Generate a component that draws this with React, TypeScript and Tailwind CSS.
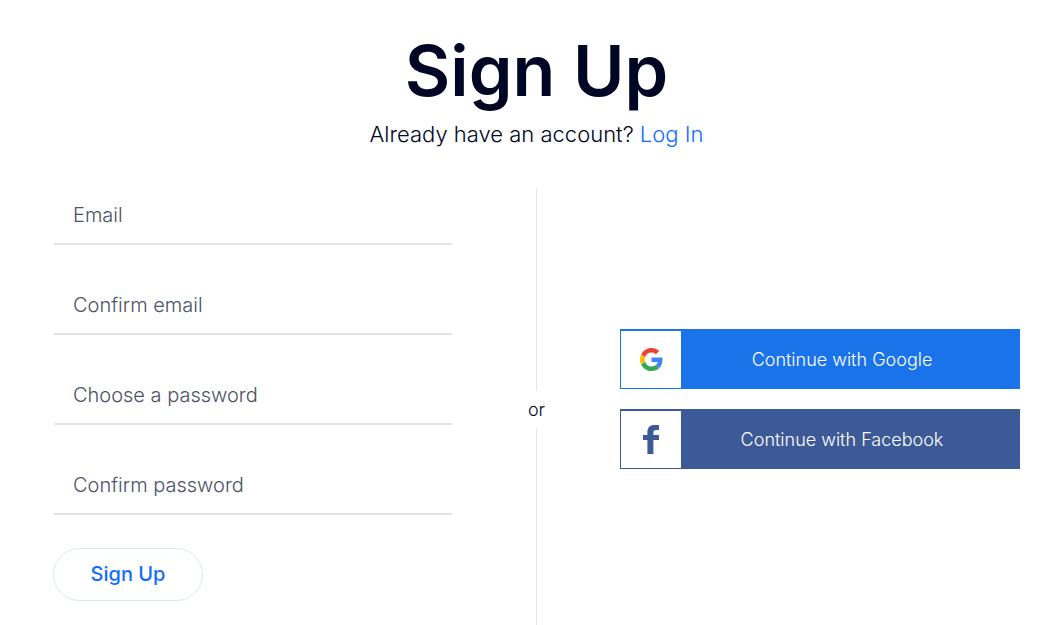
import type { FormEvent, ReactNode } from 'react';

const fields = [
  { id: 'email', label: 'Email', type: 'email' },
  { id: 'confirm-email', label: 'Confirm email', type: 'email' },
  { id: 'password', label: 'Choose a password', type: 'password' },
  { id: 'confirm-password', label: 'Confirm password', type: 'password' },
];

function GoogleIcon() {
  return (
    <svg viewBox="0 0 48 48" className="w-[23px] h-[23px]" aria-hidden="true">
      <path fill="#EA4335" d="M24 9.5c3.54 0 6.71 1.22 9.21 3.6l6.85-6.85C35.9 2.38 30.47 0 24 0 14.62 0 6.51 5.38 2.56 13.22l7.98 6.19C12.43 13.72 17.74 9.5 24 9.5z" />
      <path fill="#4285F4" d="M46.98 24.55c0-1.57-.15-3.09-.38-4.55H24v9.02h12.94c-.58 2.96-2.26 5.48-4.78 7.18l7.73 6c4.51-4.18 7.09-10.36 7.09-17.65z" />
      <path fill="#FBBC05" d="M10.53 28.59c-.48-1.45-.76-2.99-.76-4.59s.27-3.14.76-4.59l-7.98-6.19C.92 16.46 0 20.12 0 24c0 3.88.92 7.54 2.56 10.78l7.97-6.19z" />
      <path fill="#34A853" d="M24 48c6.48 0 11.93-2.13 15.89-5.81l-7.73-6c-2.15 1.45-4.92 2.3-8.16 2.3-6.26 0-11.57-4.22-13.47-9.91l-7.98 6.19C6.51 42.62 14.62 48 24 48z" />
    </svg>
  );
}

function FacebookIcon() {
  return (
    <svg viewBox="0 0 16 29" className="w-4 h-[29px]" fill="#3D5A98" aria-hidden="true">
      <path d="M4.4 29V15H0v-5h4.4V7.2C4.4 2.6 7 0 11.4 0H16v5h-2.9C11 5 10.4 6 10.4 7.6V10H16v5h-5.6v14z" />
    </svg>
  );
}

interface SocialButtonProps {
  icon: ReactNode;
  label: string;
  className: string;
}

function SocialButton({ icon, label, className }: SocialButtonProps) {
  return (
    <button
      type="button"
      className={`flex h-[60px] w-full items-stretch border border-t-2 text-lg font-light text-white cursor-pointer ${className}`}
    >
      <span className="flex w-[60px] shrink-0 items-center justify-center bg-white">{icon}</span>
      <span className="flex flex-1 items-center justify-center pt-0.5 pr-4">{label}</span>
    </button>
  );
}

export default function App() {
  const handleSubmit = (e: FormEvent) => e.preventDefault();

  return (
    <main className="flex min-h-screen flex-col bg-white pl-[53px] pr-[42px] pt-[27px] font-['Inter',sans-serif] text-[#000624]">
      {/* Heading */}
      <header className="text-center">
        <h1 className="text-[70px] leading-[88px] font-semibold">Sign Up</h1>
        <p className="pt-[5px] text-[22px] leading-7 font-light">
          Already have an account?{' '}
          <a href="#login" className="text-[#116DFF]">Log In</a>
        </p>
      </header>

      <div className="mt-10 grid flex-1 grid-cols-[1fr_167px_1fr]">
        {/* Email form */}
        <form onSubmit={handleSubmit} className="flex flex-col gap-[33px]">
          {fields.map(({ id, label, type }) => (
            <div key={id} className="px-px">
              <input
                id={id}
                type={type}
                aria-label={label}
                placeholder={label}
                className="block h-[57px] w-full border-b-2 border-[#DFE3EB] px-[19px] pb-0.5 text-xl font-light outline-none placeholder:text-[#4D5265] focus:border-[#116DFF]"
              />
            </div>
          ))}
          <button
            type="submit"
            className="h-[53px] w-[150px] rounded-full border border-[#D6E6FE] pb-0.5 text-xl font-medium text-[#116DFF] cursor-pointer"
          >
            Sign Up
          </button>
        </form>

        {/* Divider */}
        <div className="flex flex-col items-center">
          <div className="w-px flex-[203] bg-[#E5E6EA]" />
          <span className="flex h-[37px] items-center text-lg font-light">or</span>
          <div className="w-px flex-[197] bg-[#E5E6EA]" />
        </div>

        {/* Social sign up */}
        <div className="flex flex-col justify-center gap-5 pb-4">
          <SocialButton icon={<GoogleIcon />} label="Continue with Google" className="border-[#1A73E8] bg-[#1A73E8]" />
          <SocialButton icon={<FacebookIcon />} label="Continue with Facebook" className="border-[#3D5A98] bg-[#3D5A98]" />
        </div>
      </div>
    </main>
  );
}
